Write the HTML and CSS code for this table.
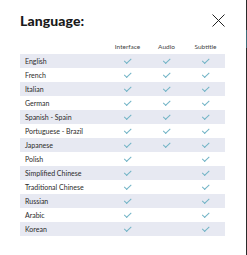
FILE: index.html
```html
<!DOCTYPE html>
<html>
<head>
<meta charset="utf-8">
<link rel="stylesheet" href="styles.css">
</head>
<body>
<div class="page">
  <div class="modal">
    <div class="head">
      <h1 class="title">Language:</h1>
      <svg class="close" width="13" height="13" viewBox="0 0 13 13"><path d="M0.5 0.5L12.5 12.5M12.5 0.5L0.5 12.5" stroke="#222" stroke-width="1" fill="none"/></svg>
    </div>
    <div class="table">
      <div class="row hdr"><span class="name"></span><span class="c">Interface</span><span class="c">Audio</span><span class="c">Subtitle</span></div>
      <div class="row odd"><span class="name">English</span><span class="c"><i class="ck"></i></span><span class="c"><i class="ck"></i></span><span class="c"><i class="ck"></i></span></div>
      <div class="row"><span class="name">French</span><span class="c"><i class="ck"></i></span><span class="c"><i class="ck"></i></span><span class="c"><i class="ck"></i></span></div>
      <div class="row odd"><span class="name">Italian</span><span class="c"><i class="ck"></i></span><span class="c"><i class="ck"></i></span><span class="c"><i class="ck"></i></span></div>
      <div class="row"><span class="name">German</span><span class="c"><i class="ck"></i></span><span class="c"><i class="ck"></i></span><span class="c"><i class="ck"></i></span></div>
      <div class="row odd"><span class="name">Spanish - Spain</span><span class="c"><i class="ck"></i></span><span class="c"><i class="ck"></i></span><span class="c"><i class="ck"></i></span></div>
      <div class="row"><span class="name">Portuguese - Brazil</span><span class="c"><i class="ck"></i></span><span class="c"><i class="ck"></i></span><span class="c"><i class="ck"></i></span></div>
      <div class="row odd"><span class="name">Japanese</span><span class="c"><i class="ck"></i></span><span class="c"><i class="ck"></i></span><span class="c"><i class="ck"></i></span></div>
      <div class="row"><span class="name">Polish</span><span class="c"><i class="ck"></i></span><span class="c"></span><span class="c"><i class="ck"></i></span></div>
      <div class="row odd"><span class="name">Simplified Chinese</span><span class="c"><i class="ck"></i></span><span class="c"></span><span class="c"><i class="ck"></i></span></div>
      <div class="row"><span class="name">Traditional Chinese</span><span class="c"><i class="ck"></i></span><span class="c"></span><span class="c"><i class="ck"></i></span></div>
      <div class="row odd"><span class="name">Russian</span><span class="c"><i class="ck"></i></span><span class="c"></span><span class="c"><i class="ck"></i></span></div>
      <div class="row"><span class="name">Arabic</span><span class="c"><i class="ck"></i></span><span class="c"></span><span class="c"><i class="ck"></i></span></div>
      <div class="row odd"><span class="name">Korean</span><span class="c"><i class="ck"></i></span><span class="c"></span><span class="c"><i class="ck"></i></span></div>
    </div>
  </div>
  <div class="edge"></div>
</div>
</body>
</html>
```
FILE: styles.css
```css
html, body { margin: 0; padding: 0; background: #fff; }
body { font-family: Lato, "Noto Sans", sans-serif; color: #2b2b2b; }
.page { display: flex; width: 247px; height: 255px; }
.modal { width: 246px; padding: 13px 21px 0 20px; box-sizing: border-box; }
.edge { width: 1px; height: 255px; background: linear-gradient(#2a2a2a 0, #2a2a2a 30px, #3f6b78 30px, #3f6b78 48px, #2a2a2a 48px, #2a2a2a 100%); }
.head { display: flex; justify-content: space-between; align-items: center; height: 15px; margin-bottom: 11px; }
.title { margin: 0; font-size: 14px; font-weight: 900; letter-spacing: 0.1px; color: #1a1a1a; line-height: 15px; }
.close { display: block; }
.table { display: flex; flex-direction: column; width: 205px; }
.row { display: grid; grid-template-columns: 88px 39px 39px 39px; height: 14px; align-items: center; font-size: 7px; }
.row.hdr { height: 15px; color: #444; font-size: 6.5px; }
.row.odd { background: #e7e9f2; }
.name { padding-left: 5px; }
.c { display: flex; justify-content: center; align-items: center; }
.ck { display: block; width: 2.5px; height: 5.5px; border-right: 1px solid #72b4c6; border-bottom: 1px solid #72b4c6; transform: rotate(45deg) translate(-1px, -1px); }
```
